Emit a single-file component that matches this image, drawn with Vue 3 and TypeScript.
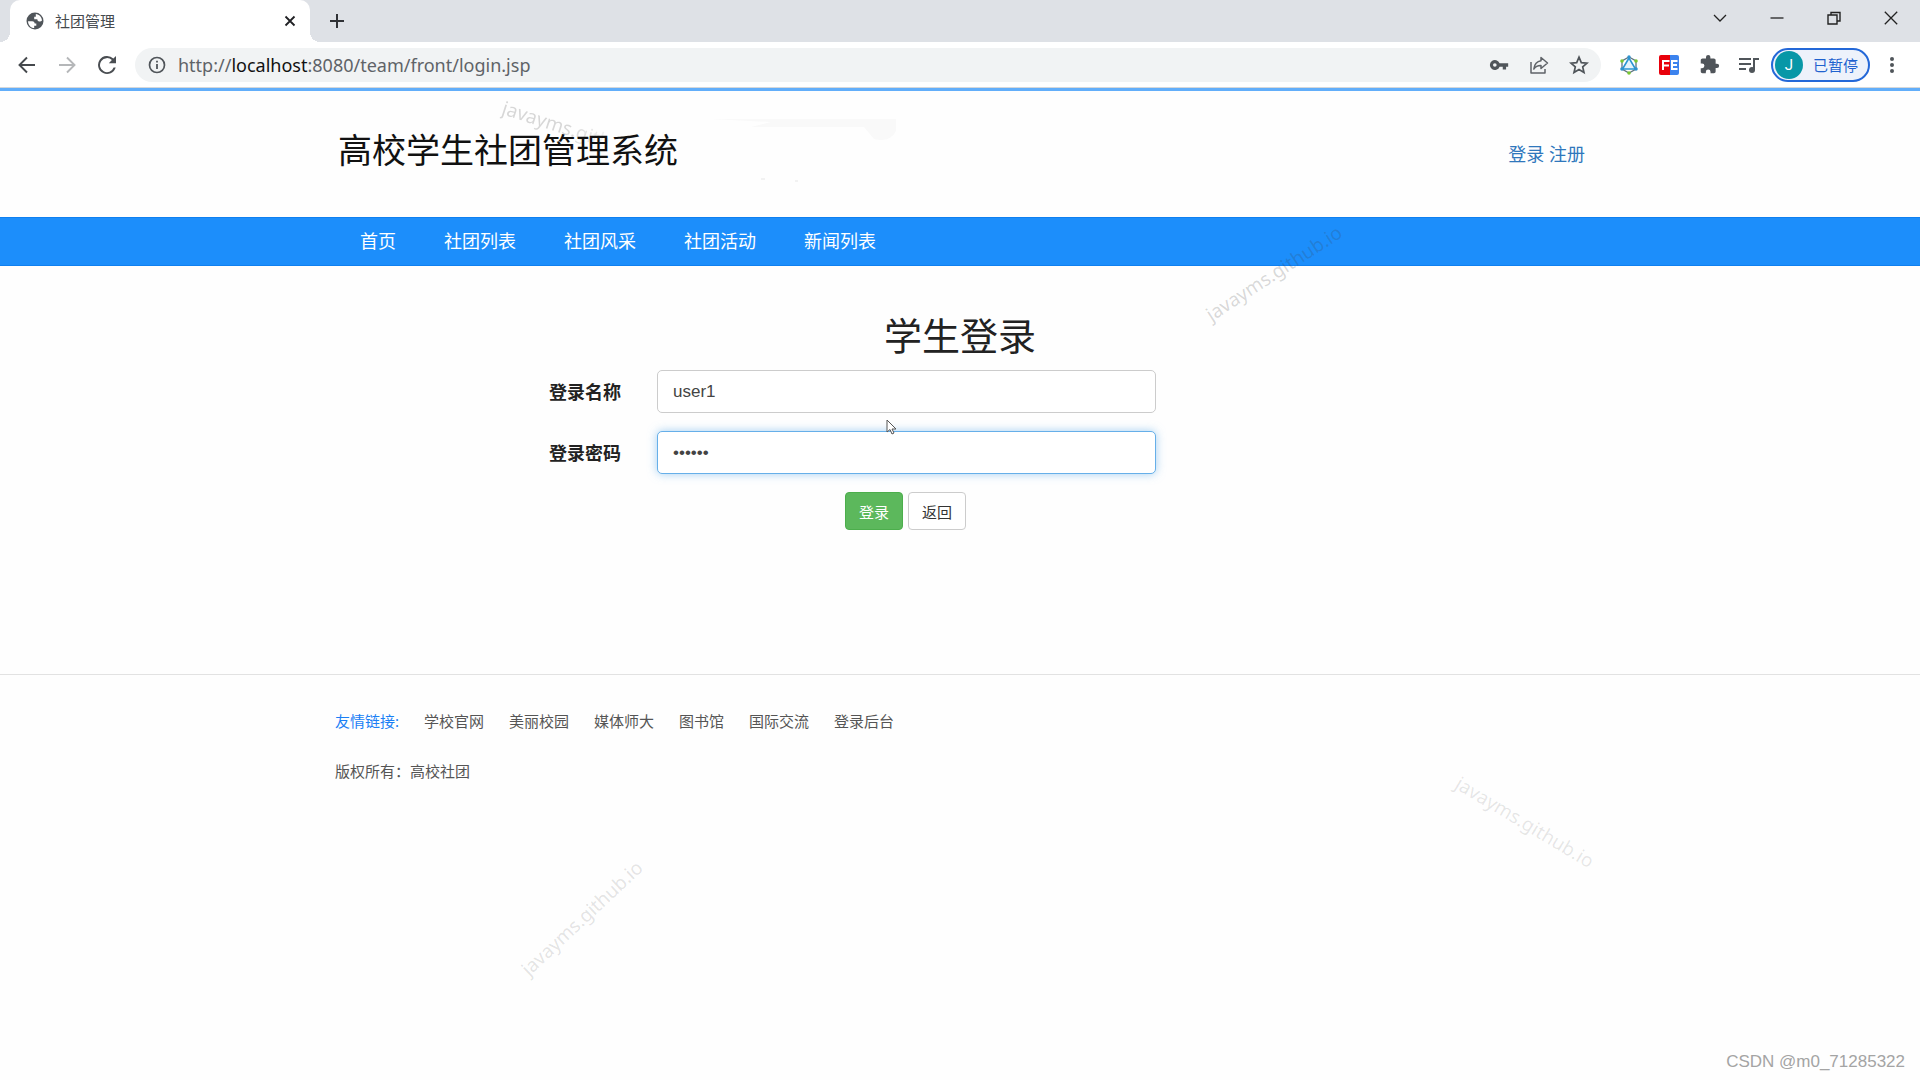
<script setup lang="ts">
import { ref } from 'vue'

const username = ref('user1')
const password = ref('123456')
const navItems: string[] = ['首页', '社团列表', '社团风采', '社团活动', '新闻列表']
const friendLinks: string[] = ['学校官网', '美丽校园', '媒体师大', '图书馆', '国际交流', '登录后台']
const watermark = 'javayms.github.io'
</script>

<template>
  <div class="window">
    <div class="tabstrip">
      <div class="tab">
        <svg width="20" height="20" viewBox="0 0 20 20" aria-hidden="true">
          <circle cx="10" cy="10" r="8.500" fill="#50555a" />
          <path fill="#fff" d="M3 10.200h4.200c1.700 0 2.500 1 2.500 2.300h1.600v2.300H9.200v2.300C5.800 17 3.200 14 3 10.200z" />
          <path fill="#fff" d="M10.800 3.100c3.300.3 6 3 6.200 6.500-.7.700-1.700 1-2.700.8-1.300-.2-2-1-2-2.200H9.200V5.700h1.600z" />
        </svg>
        <span class="tab-title">社团管理</span>
        <button class="icon-btn small" aria-label="关闭标签页">
          <svg width="12" height="12" viewBox="0 0 12 12"><path d="M1.500 1.500l9 9M10.500 1.500l-9 9" stroke="#202124" stroke-width="1.800" /></svg>
        </button>
      </div>
      <button class="icon-btn newtab" aria-label="新标签页">
        <svg width="16" height="16" viewBox="0 0 16 16"><path d="M8 1v14M1 8h14" stroke="#303236" stroke-width="2" /></svg>
      </button>
      <div class="window-controls">
        <button aria-label="搜索标签页"><svg width="14" height="14" viewBox="0 0 14 14"><path d="M1 4l6 6 6-6" stroke="#222" stroke-width="1.300" fill="none" /></svg></button>
        <button aria-label="最小化"><svg width="14" height="14" viewBox="0 0 14 14"><path d="M.5 7h13" stroke="#222" stroke-width="1.300" /></svg></button>
        <button aria-label="还原"><svg width="14" height="14" viewBox="0 0 14 14"><path d="M1 4h9v9H1zM4 4V1.500h9V10h-3" stroke="#222" stroke-width="1.400" fill="none" /></svg></button>
        <button aria-label="关闭"><svg width="14" height="14" viewBox="0 0 14 14"><path d="M.8.800l12.400 12.400M13.200.800L.800 13.200" stroke="#222" stroke-width="1.300" /></svg></button>
      </div>
    </div>

    <div class="toolbar">
      <div class="history">
        <button class="icon-btn" aria-label="后退"><svg width="18" height="18" viewBox="0 0 18 18"><path d="M17 9H2M9 1.500L1.500 9 9 16.500" stroke="#45494d" stroke-width="1.900" fill="none" /></svg></button>
        <button class="icon-btn" aria-label="前进"><svg width="18" height="18" viewBox="0 0 18 18"><path d="M1 9h15M9 1.500L16.500 9 9 16.500" stroke="#b5b7b9" stroke-width="1.900" fill="none" /></svg></button>
        <button class="icon-btn" aria-label="重新加载"><svg width="24" height="24" viewBox="0 0 24 24"><path fill="#4a4e52" d="M18.400 5.600A9 9 0 1 0 20.700 14.500H18.600A7 7 0 1 1 16.900 7.100L13.800 10.200H21V3z" /></svg></button>
      </div>
      <div class="omnibox">
        <svg width="18" height="18" viewBox="0 0 18 18" aria-hidden="true"><circle cx="9" cy="9" r="7.500" fill="none" stroke="#50555a" stroke-width="1.700" /><path d="M9 8v5M9 4.800v1.800" stroke="#50555a" stroke-width="1.800" /></svg>
        <span class="url">http://<b>localhost</b>:8080/team/front/login.jsp</span>
        <div class="omni-icons">
          <button class="icon-btn" aria-label="密码"><svg width="20" height="20" viewBox="0 0 24 24"><path fill="#50555a" fill-rule="evenodd" d="M12.700 10A6 6 0 1 0 12.700 14H16.500v3.500H20.500V14H23v-4zM7 14.200a2.200 2.200 0 1 1 0-4.400 2.200 2.200 0 0 1 0 4.400z" /></svg></button>
          <button class="icon-btn" aria-label="分享"><svg width="20" height="20" viewBox="0 0 20 20"><path d="M2 7v11h14v-4M12 2.500l6.500 5.500-6.500 5.500V10.400C8.700 10.300 6.500 11.400 4.800 14 5.400 9.500 8 6.200 12 5.700z" fill="none" stroke="#5f6368" stroke-width="1.500" stroke-linejoin="round" /></svg></button>
          <button class="icon-btn" aria-label="收藏"><svg width="20" height="20" viewBox="0 0 20 20"><path d="M10 2.200l2.300 5.400 5.800.5-4.400 3.800 1.300 5.700L10 14.600l-5 3 1.300-5.700L1.900 8.100l5.800-.5z" fill="none" stroke="#50555a" stroke-width="1.700" /></svg></button>
        </div>
      </div>
      <div class="extensions">
        <button class="icon-btn" aria-label="扩展程序一">
          <svg width="20" height="20" viewBox="0 0 20 20"><path d="M10 2l7 4v8l-7 4-7-4V6z" fill="none" stroke="#5f7582" stroke-width="1.300" /><path d="M10 3L3.500 14h13z" fill="#e5f3fb" stroke="#2b95d2" stroke-width="1.600" /><g fill="#2e93ce"><circle cx="10" cy="2" r="1.700" /><circle cx="3" cy="14" r="1.800" /><circle cx="17" cy="14" r="1.800" /></g><g fill="#79c832"><circle cx="3" cy="6" r="1.800" /><circle cx="17" cy="6" r="1.800" /><circle cx="10" cy="18" r="1.800" /></g></svg>
        </button>
        <button class="icon-btn" aria-label="FE助手">
          <svg width="20" height="20" viewBox="0 0 20 20"><path d="M2 0h9v20H2a2 2 0 0 1-2-2V2a2 2 0 0 1 2-2z" fill="#e8000b" /><path d="M11 0h7a2 2 0 0 1 2 2v16a2 2 0 0 1-2 2h-7z" fill="#3c83ee" /><path d="M10.500 6H4v9M4 10.500h6M18.500 6H13v8h5.500M13 10h5" stroke="#fff" stroke-width="2" fill="none" /></svg>
        </button>
        <button class="icon-btn" aria-label="扩展程序">
          <svg width="21" height="21" viewBox="0 0 24 24"><path fill="#50555a" d="M20.500 11H19V7c0-1.100-.9-2-2-2h-4V3.500a2.500 2.500 0 0 0-5 0V5H4c-1.100 0-2 .9-2 2v3.800h1.500a2.700 2.700 0 0 1 0 5.400H2V20c0 1.100.9 2 2 2h3.800v-1.500a2.700 2.700 0 0 1 5.400 0V22H17c1.100 0 2-.9 2-2v-4h1.500a2.500 2.500 0 0 0 0-5z" /></svg>
        </button>
        <button class="icon-btn" aria-label="媒体控制">
          <svg width="20" height="20" viewBox="0 0 20 20"><path d="M0 4h12M0 9h12M0 14h7" stroke="#50555a" stroke-width="2" /><path d="M15 15V4h5" fill="none" stroke="#50555a" stroke-width="2" /><circle cx="13" cy="15" r="3" fill="#50555a" /></svg>
        </button>
      </div>
      <button class="profile"><span class="avatar">J</span><span>已暂停</span></button>
      <button class="icon-btn menu" aria-label="菜单"><svg width="6" height="18" viewBox="0 0 6 18"><g fill="#50555a"><circle cx="3" cy="3" r="2" /><circle cx="3" cy="9" r="2" /><circle cx="3" cy="15" r="2" /></g></svg></button>
    </div>

    <div class="page">
      <header class="site-header">
        <div class="container header-row">
          <svg class="banner" width="400" height="80" viewBox="0 0 400 80" aria-hidden="true">
            <path d="M70 10h185v12q-6 12-22 8l-10-12H110l20-5z" fill="#f9f9f9" />
            <path d="M120 70h4M154 72h3M400 40h5" stroke="#f2f2f2" stroke-width="2" />
          </svg>
          <span class="mark mark-a" aria-hidden="true">javayms.gith</span>
          <div class="brand">高校学生社团管理系统</div>
          <div class="account"><a href="#login">登录</a> <a href="#register">注册</a></div>
        </div>
      </header>

      <nav class="site-nav">
        <div class="container nav-row">
          <a v-for="item in navItems" :key="item" href="#">{{ item }}</a>
        </div>
        <span class="mark mark-b" aria-hidden="true">{{ watermark }}</span>
      </nav>

      <main>
        <form class="login" @submit.prevent>
          <h1>学生登录</h1>
          <div class="field">
            <label for="username">登录名称</label>
            <input id="username" v-model="username" type="text" />
          </div>
          <div class="field">
            <label for="password">登录密码</label>
            <input id="password" v-model="password" class="focused" type="password" />
            <svg class="pointer" width="12" height="16" viewBox="0 0 12 16" aria-hidden="true"><path d="M1 1v12l3-2.500L6 15l2-1-2-4h4z" fill="#fff" stroke="#555" stroke-width="1" /></svg>
          </div>
          <div class="actions">
            <button class="btn primary" type="submit">登录</button>
            <button class="btn" type="button">返回</button>
          </div>
        </form>
      </main>

      <footer>
        <div class="container">
          <div class="links">
            <span class="links-title">友情链接:</span>
            <a v-for="link in friendLinks" :key="link" href="#">{{ link }}</a>
          </div>
          <p>版权所有：高校社团</p>
        </div>
      </footer>
    </div>

    <span class="mark mark-c" aria-hidden="true">{{ watermark }}</span>
    <span class="mark mark-d" aria-hidden="true">{{ watermark }}</span>
    <span class="credit">CSDN @m0_71285322</span>
  </div>
</template>

<style>
body {
  margin: 0;
  background: #fefefe;
}
</style>

<style scoped>
* {
  box-sizing: border-box;
}
.window {
  position: relative;
  min-height: 100vh;
  overflow: hidden;
  font-family: "Noto Sans", "Noto Sans CJK SC", sans-serif;
  color: #222;
}
button {
  font-family: inherit;
  padding: 0;
  border: 0;
  background: none;
}
svg {
  display: block;
}
a {
  text-decoration: none;
}
.icon-btn {
  display: flex;
  align-items: center;
  justify-content: center;
  width: 40px;
  height: 34px;
}
.tabstrip {
  display: flex;
  height: 42px;
  padding-left: 10px;
  background: #dee1e6;
}
.tab {
  position: relative;
  display: flex;
  align-items: center;
  width: 300px;
  padding: 0 10px 0 15px;
  border-radius: 10px 10px 0 0;
  background: #fff;
}
.tab::before,
.tab::after {
  content: "";
  position: absolute;
  bottom: 0;
  width: 10px;
  height: 10px;
}
.tab::before {
  left: -10px;
  background: radial-gradient(circle at 0 0, #dee1e6 10px, #fff 10px);
}
.tab::after {
  right: -10px;
  background: radial-gradient(circle at 100% 0, #dee1e6 10px, #fff 10px);
}
.tab-title {
  flex: 1;
  margin-left: 10px;
  font-size: 15px;
  line-height: 20px;
  color: #45494d;
}
.icon-btn.small {
  width: 20px;
  height: 20px;
}
.newtab {
  height: 42px;
  margin-left: 7px;
}
.window-controls {
  display: flex;
  margin-left: auto;
  padding-right: 1px;
}
.window-controls button {
  display: flex;
  align-items: center;
  justify-content: center;
  width: 57px;
  height: 36px;
}
.toolbar {
  display: flex;
  align-items: center;
  height: 49px;
  padding: 0 7px 1px;
  border-bottom: 3px solid #62aefa;
  background: #fff;
  box-shadow: inset 0 -1px #d6d8da;
}
.history {
  display: flex;
}
.omnibox {
  display: flex;
  flex: 1;
  align-items: center;
  height: 34px;
  margin-left: 8px;
  padding: 0 2px 0 13px;
  border-radius: 17px;
  background: #f1f3f4;
}
.url {
  margin-left: 12px;
  font-size: 18px;
  line-height: 24px;
  color: #5f6368;
}
.url b {
  font-weight: 400;
  color: #111;
}
.omni-icons {
  display: flex;
  margin-left: auto;
}
.extensions {
  display: flex;
  margin: 0 2px 0 8px;
}
.profile {
  display: flex;
  align-items: center;
  gap: 10px;
  width: 99px;
  height: 34px;
  padding-left: 2px;
  border: 2px solid #2468d8;
  border-radius: 17px;
  background: #edf2fb;
  color: #1f62cf;
  font-size: 15px;
}
.avatar {
  width: 28px;
  height: 28px;
  border-radius: 50%;
  background: #0797a7;
  color: #fff;
  font-family: Roboto, sans-serif;
  line-height: 28px;
  text-align: center;
}
.icon-btn.menu {
  width: 43px;
}
.container {
  width: 100%;
  max-width: 1250px;
  margin: 0 auto;
}
.site-header {
  height: 126px;
}
.header-row {
  position: relative;
  display: flex;
  align-items: center;
  justify-content: space-between;
  height: 117px;
}
.banner {
  position: absolute;
  left: 306px;
  top: 18px;
}
.brand {
  position: relative;
  padding-left: 3px;
  font-size: 34px;
  line-height: 48px;
  color: #111;
}
.account {
  padding-top: 8px;
  font-size: 18px;
  line-height: 24px;
}
.account a {
  color: #2f77bc;
}
.site-nav {
  position: relative;
  border: 1px solid #0f80f0;
  border-width: 1px 0;
  background: #1c8efb;
}
.nav-row {
  display: flex;
  gap: 48px;
  padding-left: 25px;
}
.nav-row a {
  font-size: 18px;
  line-height: 47px;
  color: #fff;
}
main {
  padding: 47px 0 144px;
}
.login {
  width: 100%;
  max-width: 822px;
  margin: 0 auto;
}
h1 {
  margin: 0 0 13px;
  font-size: 38px;
  font-weight: 400;
  line-height: 44px;
  text-align: center;
}
.field {
  position: relative;
  display: flex;
  align-items: center;
  margin-bottom: 18px;
}
label {
  width: 108px;
  font-size: 18px;
  font-weight: 700;
  line-height: 24px;
}
input {
  width: 499px;
  height: 43px;
  padding: 0 15px;
  border: 1px solid #ccc;
  border-radius: 5px;
  outline: 0;
  background: #fff;
  color: #444;
  font-family: "Liberation Sans", Arial, sans-serif;
  font-size: 17px;
}
input.focused {
  border-color: #66afe9;
  box-shadow: 0 0 10px rgba(102, 175, 233, 0.6);
}
.pointer {
  position: absolute;
  left: 337px;
  top: -12px;
}
.actions {
  display: flex;
  justify-content: center;
  gap: 5px;
  width: 499px;
  margin-left: 107px;
}
.btn {
  width: 58px;
  height: 38px;
  border: 1px solid #ccc;
  border-radius: 4px;
  background: #fff;
  color: #333;
  font-size: 15px;
}
.btn.primary {
  border-color: #4cae4c;
  background: #5cb85c;
  color: #fff;
}
footer {
  padding-top: 34px;
  border-top: 1px solid #e2e2e2;
  font-size: 15px;
  line-height: 24px;
  color: #555;
}
.links {
  display: flex;
  gap: 25px;
}
.links a {
  color: #555;
}
.links-title {
  color: #1a7ff5;
}
footer p {
  margin: 26px 0 0;
}
.mark {
  position: absolute;
  font-size: 19px;
  line-height: 24px;
  white-space: nowrap;
  color: rgba(60, 60, 60, 0.2);
  pointer-events: none;
}
.mark-a {
  left: 168px;
  top: 4px;
  transform: rotate(18deg);
  transform-origin: 0 50%;
  mask-image: linear-gradient(to right, #000 60%, rgba(0, 0, 0, 0.2));
}
.mark-b {
  left: 1195px;
  top: 43px;
  transform: rotate(-33deg);
}
.mark-c {
  left: 1446px;
  top: 810px;
  color: rgba(60, 60, 60, 0.12);
  transform: rotate(31deg);
}
.mark-d {
  left: 503px;
  top: 906px;
  color: rgba(60, 60, 60, 0.14);
  transform: rotate(-43deg);
}
.credit {
  position: absolute;
  right: 15px;
  bottom: 6px;
  font-family: "Liberation Sans", Arial, sans-serif;
  font-size: 17px;
  line-height: 24px;
  color: #a4a4a4;
}
</style>
